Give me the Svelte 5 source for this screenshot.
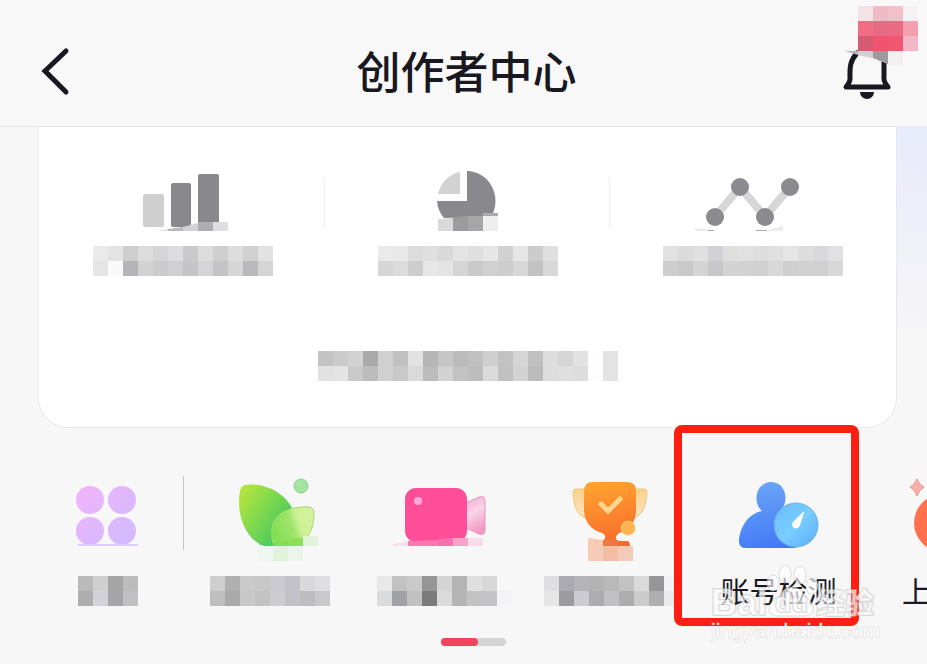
<script>
  // Each row is a run of two-digit grey levels or full hex colours, one per 15px block.
  const grey = (row) => row.split(' ').map((v) => `#${v.length === 2 ? v + v + v : v}`);

  const stats = [
    {
      id: 'bars',
      view: '93 166 180 80',
      rows: ['ea e3 ce dd d5 dddde0 c9c9cc dc cf dd d0 e2', 'e5 f9 b5b4b9 d2 cc d0d0d2 c5 d5d5d7 c4c4c6 d6 b9b9bc d5']
    },
    {
      id: 'pie',
      view: '378 166 180 80',
      rows: ['ea e9 dc df d9 e3 df e6 d1 e5 cc df', 'd6 dc cd e7 e4 d5 ca d0 cd d7 c2 d8']
    },
    {
      id: 'trend',
      view: '663 166 180 80',
      rows: ['e1 db e0 d2d2d6 df e1 dd e0 e5 dd d9d9dd e1e1e4', 'cd c9 d4 c7c7ca d3 d2 d1 d8 cf d1 d0 d8']
    }
  ];

  const summary = [
    'c3 cb d2 aa d0 c0 e2 b6 c6 bb c1 cf c2 d5 c0 dd d5 e2 fe e3',
    'e2 e4 ca bc d0 c9 da bc d2 c2 bd db c1 d3 bb dd df dd fe e3'
  ];

  const more = ['ba cf a5 bc', 'ae d3d2d9 a5a4aa c1c1c3'];

  const tools = [
    {
      id: 'leaf',
      view: '194 476 167 100',
      rows: ['ce b0 ca c8 cbcad1 c2c1c9 d9d9db dfdfe2 f7', 'bf aa c8 c3 cdccd1 c2c1c9 bebec0 c9c9cc f7']
    },
    {
      id: 'camera',
      view: '361 476 167 100',
      rows: ['e8 c2 ca 96 d4 b4 df d7 f7', 'db a1a1a8 c1 7b da b5 c3 c4c4c8 f4f4f7']
    },
    {
      id: 'trophy',
      view: '528 476 167 100',
      rows: ['dfdfe2 aaaab0 b5b5b9 b3 b9 c3 da 969698 f2', 'e6 9c9c9e cccbd2 adadaf c1c1c3 ad cc afafb1 ea']
    },
    { id: 'account', view: '695 476 167 100', label: '账号检测' },
    { id: 'promote', view: '862 476 167 100', label: '上' }
  ];
</script>

{#snippet mosaic(rows)}
  <span class="mosaic">
    {#each rows as row}
      <span class="mosaic-row">
        {#each grey(row) as color}<i style:background={color}></i>{/each}
      </span>
    {/each}
  </span>
{/snippet}

<div class="page">
  <header>
    <button class="back" aria-label="返回">
      <svg viewBox="36 41 40 60" width="40" height="60">
        <path d="M66 51 45 71 66 92" fill="none" stroke="#19171f" stroke-width="5" stroke-linecap="round" stroke-linejoin="miter" />
      </svg>
    </button>
    <h1>创作者中心</h1>
    <button class="bell" aria-label="通知">
      <svg viewBox="840 0 87 110" width="87" height="110">
        <path d="M857 53C849 62 850 69 850 79Q850 82 846 87H888Q884 82 884 79V60" fill="none" stroke="#19171f" stroke-width="5" stroke-linecap="round" stroke-linejoin="round" />
        <path d="M860 92h14a7 7 0 0 1-14 0z" fill="#19171f" />
        <path d="M845 51h43v13l-15-6-15-3z" fill="#b5b3b6" />
        <g shape-rendering="crispEdges">
          <path d="M858 51h15v7l-15-3z" fill="#d3d0d5" />
          <path d="M873 51h15v13l-15-6z" fill="#9f999e" />
          <path d="M888 51h15v14h-15z" fill="#f6eff2" />
          <path d="M858 6h15v15h-15z" fill="#f3e3e7" />
          <path d="M873 6h15v15h-15z" fill="#f0bac6" />
          <path d="M888 6h15v15h-15z" fill="#f3c0ca" />
          <path d="M903 6h15v15h-15z" fill="#f7f1f3" />
          <path d="M858 21h15v15h-15z" fill="#f16d84" />
          <path d="M873 21h15v15h-15z" fill="#e66b84" />
          <path d="M888 21h15v15h-15z" fill="#e96b82" />
          <path d="M903 21h15v15h-15z" fill="#f49eae" />
          <path d="M858 36h15v15h-15z" fill="#d65a70" />
          <path d="M873 36h15v15h-15z" fill="#f2536f" />
          <path d="M888 36h15v15h-15z" fill="#f0566f" />
          <path d="M903 36h15v15h-15z" fill="#f3b7c5" />
        </g>
      </svg>
    </button>
  </header>

  <main>
    <section class="card">
      <div class="stats">
        {#each stats as stat}
          <button class="stat" aria-label={stat.id}>
            <svg viewBox={stat.view} width="180" height="80">
              {#if stat.id === 'bars'}
                <rect x="143" y="194" width="21" height="33" rx="2" fill="#cfcfd0" />
                <rect x="171" y="183" width="20" height="44" rx="2" fill="#89888c" />
                <rect x="198" y="174" width="21" height="52" rx="2" fill="#89888c" />
                <path d="M157 231l11-2v2z" fill="#e0e0e0" />
                <path d="M168 229l15-2v4h-15z" fill="#b9b9b9" />
                <path d="M183 227l15-4v8h-15z" fill="#d2d2d4" />
                <path d="M198 222h15v9h-15z" fill="#aeaeb0" />
                <path d="M213 222h15v9h-15z" fill="#dfdfe1" />
              {:else if stat.id === 'pie'}
                <path d="M467 171A29 30 0 0 1 491 217L444 218A29 29 0 0 1 437 201H467z" fill="#89888c" />
                <path d="M460 172V194H438A28 28 0 0 1 460 172z" fill="#d2d2d3" />
                <path d="M438 219l15-1v13h-15z" fill="#dadada" />
                <path d="M453 217l15-1v15h-15z" fill="#9c9b9e" />
                <path d="M468 216h15v15h-15z" fill="#a6a6a9" />
                <path d="M483 213h15v18h-15z" fill="#eeeeee" />
                <path d="M483 213h15v3h-15z" fill="#ababad" />
              {:else}
                <path d="M715 217 740 187 765 217 790 187" fill="none" stroke="#d6d6d6" stroke-width="8" />
                <g fill="#8b8a8f">
                  <circle cx="715" cy="217" r="9" />
                  <circle cx="740" cy="187" r="9" />
                  <circle cx="765" cy="217" r="9" />
                  <circle cx="790" cy="187" r="9" />
                </g>
                <path d="M694 228l19 2v1h-17zM768 230l15-4v5h-15z" fill="#ececec" />
                <path d="M708 230h6v1h-6zM756 230h11v1h-11z" fill="#aaaaaa" />
              {/if}
            </svg>
            {@render mosaic(stat.rows)}
          </button>
        {/each}
      </div>
      <div class="summary">{@render mosaic(summary)}</div>
    </section>

    <nav class="tools">
      <button class="all" aria-label="全部">
        <svg viewBox="58 476 100 100" width="100" height="100">
          <defs>
            <linearGradient id="dots" gradientUnits="userSpaceOnUse" x1="80" y1="488" x2="132" y2="544">
              <stop offset="0" stop-color="#f1b4fb" />
              <stop offset="1" stop-color="#cfbafd" />
            </linearGradient>
          </defs>
          <g fill="url(#dots)">
            <circle cx="90" cy="500" r="14" />
            <circle cx="122" cy="500" r="14" />
            <circle cx="90" cy="531" r="14" />
            <circle cx="122" cy="531" r="14" />
          </g>
          <path d="M78 544h60v2h-60z" fill="#dccdf9" />
        </svg>
        {@render mosaic(more)}
      </button>

      {#each tools as tool}
        <button class="tool" aria-label={tool.label ?? tool.id}>
          <svg viewBox={tool.view} width="167" height="100">
            {#if tool.id === 'leaf'}
              <defs>
                <linearGradient id="leaf-a" x1="0" y1="0.1" x2="0.9" y2="0.8">
                  <stop offset="0" stop-color="#b9e53d" />
                  <stop offset="0.5" stop-color="#7ed84e" />
                  <stop offset="1" stop-color="#41c761" />
                </linearGradient>
                <linearGradient id="leaf-b" x1="0" y1="0.6" x2="1" y2="0.3">
                  <stop offset="0" stop-color="#82df53" />
                  <stop offset="0.45" stop-color="#9ee46a" />
                  <stop offset="0.65" stop-color="#cdf195" />
                  <stop offset="1" stop-color="#d5f29c" />
                </linearGradient>
              </defs>
              <path d="M245 485C263 482 284 492 292 508L278 546H264C244 539 236 512 240 491Q241 486 245 485z" fill="url(#leaf-a)" />
              <path d="M276 545H258l8-2z" fill="#52cd61" />
              <path d="M273 543C267 518 282 506 309 507Q314 508 314 513C314 524 311 534 304 541H273z" fill="url(#leaf-b)" stroke="#a0da67" />
              <circle cx="301" cy="486" r="7" fill="#a4e3a1" stroke="#8bd28b" />
              <path d="M273 541h15v5h-15z" fill="#82dd52" />
              <path d="M288 538h15v8h-15z" fill="#8be055" />
              <path d="M303 536h15v10h-15z" fill="#e3f2db" />
              <path d="M258 546h15v15h-15z" fill="#f0f6f1" />
              <path d="M273 546h15v15h-15z" fill="#e2f1dc" />
              <path d="M288 546h15v15h-15z" fill="#ecf5e9" />
            {:else if tool.id === 'camera'}
              <defs>
                <linearGradient id="lens" x1="0" y1="0" x2="0.3" y2="1">
                  <stop offset="0" stop-color="#f3a8d3" />
                  <stop offset="0.5" stop-color="#f9d5e8" />
                  <stop offset="1" stop-color="#f49ac2" />
                </linearGradient>
              </defs>
              <path d="M466 503L479 497Q485 495 485 501V530Q485 536 479 534L466 528z" fill="url(#lens)" stroke="#e19abb" />
              <rect x="405" y="488" width="62" height="54" rx="11" fill="#ff4e98" />
              <circle cx="418" cy="501" r="4" fill="#ffa8dc" />
              <path d="M393 544l15-3v5h-15z" fill="#f8dfeb" />
              <path d="M408 541l30-1 15-2v8h-45z" fill="#fb77ad" />
              <path d="M438 539l15-1v8h-15z" fill="#f66fae" />
              <path d="M453 538h15v8h-15z" fill="#f7a4c9" />
              <path d="M468 538h15v8h-15z" fill="#f7deea" />
            {:else if tool.id === 'trophy'}
              <defs>
                <linearGradient id="cup" x1="0.4" y1="0" x2="0.6" y2="1">
                  <stop offset="0" stop-color="#ffa22f" />
                  <stop offset="1" stop-color="#f76a2c" />
                </linearGradient>
                <linearGradient id="handle" x1="0" y1="0" x2="0" y2="1">
                  <stop offset="0" stop-color="#f8d28b" />
                  <stop offset="1" stop-color="#fce5bd" />
                </linearGradient>
              </defs>
              <path d="M584 489H576Q573 489 573 493C574 507 577 515 586 518zM636 489H644Q647 489 647 493C646 507 642 515 634 518z" fill="url(#handle)" stroke="#ecc47e" />
              <path d="M593 482H627Q636 482 636 491V510C636 524 628 530 619 533Q613 538 618 541H628Q630 542 630 546H603V541Q608 536 602 533C590 530 584 520 584 510V491Q584 482 593 482z" fill="url(#cup)" />
              <path d="M601 504l7 7 12-12" fill="none" stroke="#ffd68d" stroke-width="5" stroke-linecap="round" />
              <circle cx="628" cy="528" r="7" fill="#ffb451" stroke="#fac36f" />
              <path d="M588 538l15 2v6h-15z" fill="#f9cbb1" />
              <path d="M603 540h15v6h-15z" fill="#ef783e" />
              <path d="M588 546h15v15h-15z" fill="#f4ccb9" />
              <path d="M603 546h15v15h-15z" fill="#f2bea5" />
              <path d="M618 546h15v15h-15z" fill="#f4cab8" />
            {:else if tool.id === 'account'}
              <defs>
                <linearGradient id="person" x1="0.4" y1="0" x2="0.6" y2="1">
                  <stop offset="0" stop-color="#6ba5f6" />
                  <stop offset="1" stop-color="#4379f8" />
                </linearGradient>
                <linearGradient id="dial" x1="0" y1="0" x2="1" y2="1">
                  <stop offset="0" stop-color="#6abafb" />
                  <stop offset="0.5" stop-color="#79cdff" />
                  <stop offset="1" stop-color="#5aadfb" />
                </linearGradient>
              </defs>
              <path d="M762 511C752 503 756 482 771 482C786 482 788 500 783 507L796 548H746Q738 548 739 539C741 523 751 513 762 511z" fill="url(#person)" />
              <circle cx="796" cy="525" r="22" fill="url(#dial)" stroke="#71aee0" />
              <path d="M803 512Q804 511 804 513L800 525A4 4 0 1 1 794 521z" fill="#ffffff" />
            {:else}
              <path d="M917 479Q919 485 924 487 919 490 917 496 915 490 910 487 915 485 917 479z" fill="#f5afa8" stroke="#ee948d" />
              <circle cx="943" cy="523" r="29" fill="#ff704d" />
            {/if}
          </svg>
          {#if tool.label}
            <span class="label">{tool.label}</span>
          {:else}
            {@render mosaic(tool.rows)}
          {/if}
          {#if tool.id === 'account'}
            <span class="frame"></span>
            <svg class="watermark" viewBox="705 560 180 90" width="180" height="90" aria-hidden="true">
              <g fill="#ffffff" fill-opacity="0.65" stroke="#bfbfbf" stroke-opacity="0.55">
                <ellipse cx="773" cy="583" rx="6" ry="8" />
                <ellipse cx="785" cy="574" rx="6" ry="9" />
                <ellipse cx="800" cy="575" rx="6" ry="9" />
                <ellipse cx="812" cy="586" rx="6" ry="8" />
                <path d="M792 587C801 587 802 594 808 599C818 608 812 617 802 616H778C768 616 766 606 775 599C782 594 783 587 792 587z" />
                <g paint-order="stroke" stroke-width="2">
                  <text class="wm-logo" x="711" y="615">Bai</text>
                  <text class="wm-du" x="775" y="612">du</text>
                  <text class="wm-cn" x="816" y="614">经验</text>
                </g>
                <text class="wm-url" x="711" y="638" fill-opacity="0.9" paint-order="stroke">jingyan.baidu.com</text>
              </g>
            </svg>
          {/if}
        </button>
      {/each}
    </nav>

    <div class="pager"><span class="track"><span class="thumb"></span></span></div>
  </main>
</div>

<style>
  :global(body) {
    margin: 0;
    background: #f7f7f7;
  }

  .page {
    min-height: 100vh;
    overflow: hidden;
    background: #f7f7f7;
    color: #19171f;
    font-family: 'Noto Sans CJK SC', 'Noto Sans', sans-serif;
  }

  button {
    margin: 0;
    padding: 0;
    border: 0;
    background: none;
    color: inherit;
    font: inherit;
    cursor: pointer;
  }

  svg {
    display: block;
  }

  header {
    display: grid;
    grid-template-columns: 1fr auto 1fr;
    height: 126px;
    background: #f8f8f8;
    border-bottom: 1px solid #e6e6e8;
  }

  .back {
    justify-self: start;
    align-self: start;
    padding: 41px 0 0 36px;
  }

  h1 {
    margin: 0;
    padding: 38px 0 0 6px;
    font-size: 44px;
    line-height: 64px;
    font-weight: 500;
  }

  .bell {
    justify-self: end;
    align-self: start;
  }

  main {
    background: linear-gradient(#e8ebfb, #f0f0f8 120px, #f7f7f7 220px) right top / 30px 220px no-repeat;
  }

  .card {
    box-sizing: border-box;
    margin: 0 30px 0 38px;
    padding: 39px 1px 46px;
    background: #ffffff;
    border: 1px solid #e9e9ea;
    border-top: 0;
    border-radius: 0 0 30px 30px;
  }

  .stats {
    display: grid;
    grid-template-columns: repeat(3, 1fr);
  }

  .stat {
    display: flex;
    flex-direction: column;
    align-items: center;
    background: linear-gradient(#eeeeee, #eeeeee) right 12px / 1px 50px no-repeat;
  }

  .stat:last-child {
    background: none;
  }

  .mosaic,
  .mosaic-row {
    display: flex;
  }

  .mosaic {
    flex-direction: column;
  }

  .mosaic i {
    width: 15px;
    height: 15px;
  }

  .summary {
    display: flex;
    justify-content: center;
    margin-top: 75px;
  }

  .tools {
    display: flex;
    padding: 48px 0 0 31px;
  }

  .all,
  .tool {
    display: flex;
    flex: none;
    flex-direction: column;
    align-items: center;
  }

  .all {
    width: 153px;
    margin-right: 10px;
    background: linear-gradient(#c6c6c8, #c6c6c8) right top / 1px 74px no-repeat;
  }

  .tool {
    position: relative;
    width: 167px;
  }

  .label {
    min-width: 87px;
    font-size: 29px;
    line-height: 28px;
    text-align: left;
    white-space: nowrap;
  }

  .frame {
    position: absolute;
    top: -51px;
    right: 3px;
    bottom: -20px;
    left: -21px;
    border: 8px solid #ff1f12;
    border-radius: 8px;
  }

  .watermark {
    position: absolute;
    top: 84px;
    left: 10px;
  }

  .wm-logo,
  .wm-du,
  .wm-url {
    font-family: 'Liberation Sans', Arial, sans-serif;
  }

  .wm-logo {
    font-size: 36px;
    font-weight: 700;
  }

  .wm-du {
    font-size: 27px;
    font-weight: 700;
  }

  .wm-cn {
    font-size: 29px;
    font-weight: 700;
  }

  .wm-url {
    font-size: 21px;
  }

  .pager {
    display: flex;
    justify-content: center;
    padding: 32px 0 18px 20px;
  }

  .track {
    display: flex;
    width: 65px;
    height: 8px;
    border-radius: 4px;
    background: #d4d4d5;
  }

  .thumb {
    width: 37px;
    border-radius: 4px;
    background: #f4435c;
  }
</style>
